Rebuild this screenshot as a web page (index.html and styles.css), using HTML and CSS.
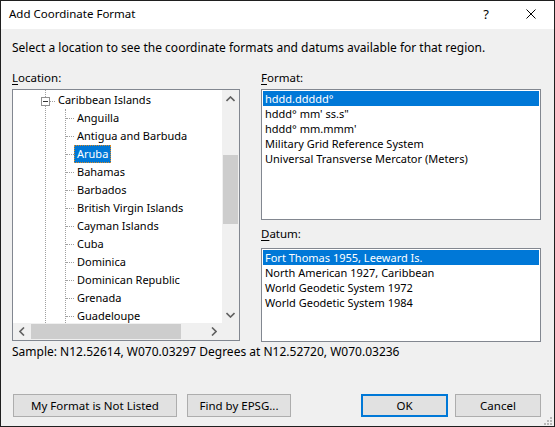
FILE: index.html
```html
<!DOCTYPE html>
<html>
<head>
<meta charset="utf-8">
<link rel="stylesheet" href="styles.css">
</head>
<body>
<div class="window">
  <div class="titlebar">
    <div class="title">Add Coordinate Format</div>
    <div class="tb-btn help">?</div>
    <div class="tb-btn close">
      <svg width="10" height="10" viewBox="0 0 10 10"><path d="M0.5 0.5 L9.5 9.5 M9.5 0.5 L0.5 9.5" stroke="#000" stroke-width="1" fill="none"/></svg>
    </div>
  </div>
  <div class="content">
    <div class="desc">Select a location to see the coordinate formats and datums available for that region.</div>
    <div class="panes">
      <div class="col">
        <div class="label"><u>L</u>ocation:</div>
        <div class="tree-box">
          <div class="tree-area">
            <div class="tree-root">
              <div class="node parent">
                <span class="expander"><span class="minus"></span></span>
                <span class="hconn short"></span>
                <span class="text">Caribbean Islands</span>
              </div>
              <div class="children">
                <div class="node leaf"><span class="hconn"></span><span class="text">Anguilla</span></div>
                <div class="node leaf"><span class="hconn"></span><span class="text">Antigua and Barbuda</span></div>
                <div class="node leaf"><span class="hconn"></span><span class="text selected">Aruba</span></div>
                <div class="node leaf"><span class="hconn"></span><span class="text">Bahamas</span></div>
                <div class="node leaf"><span class="hconn"></span><span class="text">Barbados</span></div>
                <div class="node leaf"><span class="hconn"></span><span class="text">British Virgin Islands</span></div>
                <div class="node leaf"><span class="hconn"></span><span class="text">Cayman Islands</span></div>
                <div class="node leaf"><span class="hconn"></span><span class="text">Cuba</span></div>
                <div class="node leaf"><span class="hconn"></span><span class="text">Dominica</span></div>
                <div class="node leaf"><span class="hconn"></span><span class="text">Dominican Republic</span></div>
                <div class="node leaf"><span class="hconn"></span><span class="text">Grenada</span></div>
                <div class="node leaf"><span class="hconn"></span><span class="text">Guadeloupe</span></div>
              </div>
            </div>
          </div>
          <div class="vscroll">
            <div class="arrow">
              <svg width="9" height="6" viewBox="0 0 9 6"><path d="M0.5 5 L4.5 1 L8.5 5" stroke="#606060" stroke-width="1.6" fill="none"/></svg>
            </div>
            <div class="vtrack"><div class="vthumb"></div></div>
            <div class="arrow">
              <svg width="9" height="6" viewBox="0 0 9 6"><path d="M0.5 1 L4.5 5 L8.5 1" stroke="#606060" stroke-width="1.6" fill="none"/></svg>
            </div>
          </div>
          <div class="hscroll">
            <div class="arrow">
              <svg width="6" height="9" viewBox="0 0 6 9"><path d="M5 0.5 L1 4.5 L5 8.5" stroke="#606060" stroke-width="1.6" fill="none"/></svg>
            </div>
            <div class="htrack"><div class="hthumb"></div></div>
            <div class="arrow">
              <svg width="6" height="9" viewBox="0 0 6 9"><path d="M1 0.5 L5 4.5 L1 8.5" stroke="#606060" stroke-width="1.6" fill="none"/></svg>
            </div>
          </div>
          <div class="corner"></div>
        </div>
      </div>
      <div class="col">
        <div class="label"><u>F</u>ormat:</div>
        <div class="list format-list">
          <div class="item selected">hddd.ddddd°</div>
          <div class="item">hddd° mm' ss.s"</div>
          <div class="item">hddd° mm.mmm'</div>
          <div class="item">Military Grid Reference System</div>
          <div class="item">Universal Transverse Mercator (Meters)</div>
        </div>
        <div class="label datum-label"><u>D</u>atum:</div>
        <div class="list datum-list">
          <div class="item selected">Fort Thomas 1955, Leeward Is.</div>
          <div class="item">North American 1927, Caribbean</div>
          <div class="item">World Geodetic System 1972</div>
          <div class="item">World Geodetic System 1984</div>
        </div>
      </div>
    </div>
    <div class="sample">Sample: N12.52614, W070.03297 Degrees at N12.52720, W070.03236</div>
    <div class="buttons">
      <div class="btn b-notlisted">My Format is Not Listed</div>
      <div class="btn b-epsg">Find by EPSG...</div>
      <div class="spacer"></div>
      <div class="btn b-ok">OK</div>
      <div class="btn b-cancel">Cancel</div>
    </div>
  </div>
  <svg class="grip" width="9" height="9" viewBox="0 0 9 9">
    <rect x="7" y="1" width="2" height="2" fill="#b8b8b8"/>
    <rect x="4" y="4" width="2" height="2" fill="#b8b8b8"/>
    <rect x="7" y="4" width="2" height="2" fill="#b8b8b8"/>
    <rect x="1" y="7" width="2" height="2" fill="#b8b8b8"/>
    <rect x="4" y="7" width="2" height="2" fill="#b8b8b8"/>
    <rect x="7" y="7" width="2" height="2" fill="#b8b8b8"/>
  </svg>
</div>
</body>
</html>
```
FILE: styles.css
```css
* { box-sizing: border-box; }
body {
  margin: 0;
  font-family: "Noto Sans", "Open Sans", sans-serif;
  font-size: 12px;
  color: #000;
  background: #fff;
}
.window {
  width: 555px;
  height: 427px;
  border: 1px solid #1f1f1f;
  background: #f0f0f0;
  display: flex;
  flex-direction: column;
  position: relative;
}
.titlebar {
  height: 28px;
  background: #fff;
  display: flex;
  align-items: center;
}
.title {
  flex: 1;
  padding-left: 8px;
  line-height: 16px;
  margin-top: -2px;
  font-size: 11.5px;
}
.tb-btn {
  width: 46px;
  height: 28px;
  display: flex;
  align-items: center;
  justify-content: center;
}
.help { font-size: 13px; margin-top: -2px; padding-left: 2px; }
.close svg { margin-top: -2px; }
.content {
  flex: 1;
  padding: 11px 13px 0 11px;
  display: flex;
  flex-direction: column;
}
.desc { line-height: 16px; }
.panes {
  margin-top: 14px;
  display: grid;
  grid-template-columns: 228px 280px;
  column-gap: 21px;
}
.col { display: flex; flex-direction: column; }
.label { line-height: 16px; margin-bottom: 3px; font-size: 11.5px; }
.label u { text-decoration-thickness: 1px; text-underline-offset: 2px; }
.tree-box {
  height: 252px;
  border: 1px solid #828790;
  background: #fff;
  display: grid;
  grid-template-columns: 1fr 17px;
  grid-template-rows: 1fr 17px;
  font-size: 11px;
}
.tree-area {
  overflow: hidden;
  background: #fff;
  min-height: 0;
}
.tree-root {
  margin-left: 32px;
  padding-top: 1px;
  border-left: 1px dotted #a0a0a0;
  height: 100%;
}
.node {
  height: 18px;
  display: flex;
  align-items: center;
}
.parent { margin-left: -5px; }
.expander {
  width: 9px;
  height: 9px;
  border: 1px solid #919191;
  background: #fff;
  display: flex;
  align-items: center;
  justify-content: center;
  margin-top: 2px;
}
.minus { width: 5px; height: 1px; background: #333; }
.hconn {
  width: 8px;
  border-top: 1px dotted #a0a0a0;
}
.hconn.short { width: 5px; margin-top: 2px; }
.text {
  padding: 0 2px;
  height: 18px;
  line-height: 16px;
  border: 1px solid transparent;
  white-space: nowrap;
}
.text.selected {
  background: #0078d7;
  color: #fff;
  border: 1px dotted #d98a26;
}
.children {
  margin-left: 19px;
  border-left: 1px dotted #a0a0a0;
}
.vscroll {
  background: #f0f0f0;
  display: flex;
  flex-direction: column;
}
.vscroll .arrow { height: 17px; display: flex; align-items: center; justify-content: center; }
.vtrack { flex: 1; padding-top: 48px; }
.vthumb { height: 69px; margin: 0 1px; background: #cdcdcd; }
.hscroll {
  background: #f0f0f0;
  display: flex;
}
.hscroll .arrow { width: 17px; display: flex; align-items: center; justify-content: center; }
.htrack { flex: 1; padding: 1px 0 1px 1px; }
.hthumb { width: 150px; height: 15px; background: #cdcdcd; }
.corner { background: #f0f0f0; }
.list {
  border: 1px solid #828790;
  background: #fff;
  padding: 1px;
  font-size: 11px;
}
.format-list { height: 131px; }
.datum-list { height: 94px; }
.datum-label { margin-top: 6px; margin-bottom: 6px; }
.item {
  height: 15px;
  line-height: 15px;
  padding-left: 2px;
  white-space: nowrap;
}
.item.selected { background: #0078d7; color: #fff; }
.sample { line-height: 16px; margin-top: 2px; }
.buttons {
  margin-top: 34px;
  display: flex;
  padding-left: 1px;
  font-size: 11.5px;
}
.btn {
  height: 23px;
  background: #e1e1e1;
  border: 1px solid #adadad;
  display: flex;
  align-items: center;
  justify-content: center;
  line-height: 16px;
}
.b-notlisted { width: 164px; }
.b-epsg { width: 104px; margin-left: 10px; }
.spacer { flex: 1; }
.b-ok { width: 87px; border: 2px solid #0078d7; }
.b-cancel { width: 86px; margin-left: 7px; }
.grip {
  position: absolute;
  right: 2px;
  bottom: 1px;
}
```
